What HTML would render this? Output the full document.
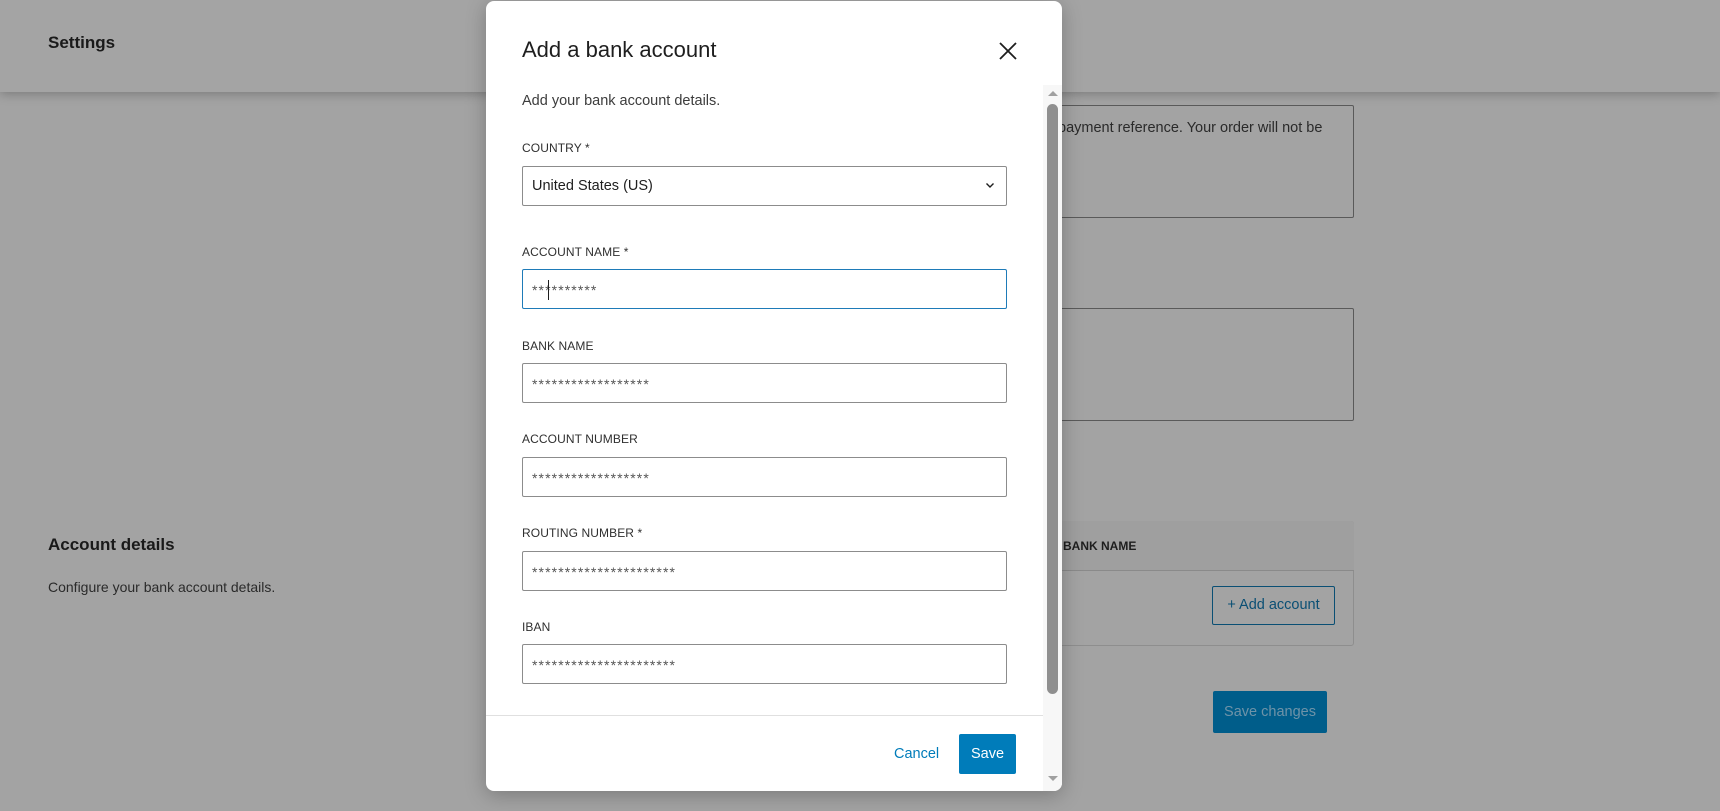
<!DOCTYPE html>
<html><head><meta charset="utf-8">
<style>
*{box-sizing:border-box;margin:0;padding:0}
body{width:1720px;height:811px;overflow:hidden;background:#a3a3a3;font-family:"Liberation Sans",sans-serif;position:relative;color:#1e1e1e}
.a{position:absolute}
.hdr{left:0;top:0;width:1720px;height:92px;background:#a4a4a4;box-shadow:0 2px 10px rgba(0,0,0,.25)}
.ta{border:1px solid #5a5a5a;border-radius:2px;background:#a3a3a3}
.modal{left:486px;top:1px;width:576px;height:790px;background:#fff;border-radius:8px;box-shadow:0 4px 20px rgba(0,0,0,.25);overflow:hidden}
.lbl{font-size:12px;color:#2f2f2f;left:36px;letter-spacing:.1px}
.inp{left:36px;width:485px;height:40px;border:1px solid #8c8c8c;border-radius:2px;font-size:14px;color:#555;padding:12px 0 0 9px;letter-spacing:1.1px}
</style></head><body>
<div class="a hdr"></div>
<div class="a" style="left:48px;top:33px;font-size:17px;font-weight:bold;color:#1a1a1a">Settings</div>

<div class="a ta" style="left:1000px;top:105px;width:354px;height:113px"></div>
<div class="a" style="left:1058px;top:120px;font-size:14.5px;color:#2a2a2a">payment reference. Your order will not be</div>
<div class="a ta" style="left:1000px;top:308px;width:354px;height:113px"></div>

<div class="a" style="left:48px;top:535px;font-size:17px;font-weight:bold;color:#1a1a1a">Account details</div>
<div class="a" style="left:48px;top:579px;font-size:14px;color:#2a2a2a">Configure your bank account details.</div>

<div class="a" style="left:1000px;top:521px;width:354px;height:125px;border:1px solid #8e8e8e;border-radius:3px"></div>
<div class="a" style="left:1000px;top:521px;width:354px;height:50px;background:#9f9f9f;border-bottom:1px solid #8a8a8a;border-radius:3px 3px 0 0"></div>
<div class="a" style="left:1063px;top:539px;font-size:12px;font-weight:bold;color:#1e1e1e">BANK NAME</div>
<div class="a" style="left:1212px;top:586px;width:123px;height:39px;border:1px solid #0a4f74;border-radius:2px;font-size:14.5px;color:#0a4f74;text-align:center;line-height:37px">+ Add account</div>
<div class="a" style="left:1213px;top:691px;width:114px;height:42px;background:#005d8a;border-radius:2px;font-size:14.5px;color:#6e93a8;text-align:center;line-height:42px">Save changes</div>

<div class="a modal">
  <div class="a" style="left:36px;top:36px;font-size:22px;color:#1e1e1e">Add a bank account</div>
  <svg class="a" style="left:512px;top:40px" width="20" height="20" viewBox="0 0 20 20"><path d="M2 2L18 18M18 2L2 18" stroke="#1e1e1e" stroke-width="1.8"/></svg>
  <div class="a" style="left:36px;top:92px;font-size:14.5px;color:#3c3c3c">Add your bank account details.</div>
  <div class="a lbl" style="top:140px">COUNTRY *</div>
  <div class="a inp" style="top:165px;font-size:14.5px;color:#1e1e1e;padding-top:11px;letter-spacing:0">United States (US)</div>
  <svg class="a" style="left:499px;top:180px" width="10" height="8" viewBox="0 0 10 8"><path d="M1.5 2.5L5 6 8.5 2.5" stroke="#1e1e1e" stroke-width="1.4" fill="none"/></svg>
  <div class="a lbl" style="top:244px">ACCOUNT NAME *</div>
  <div class="a inp" style="top:268px;border:1.5px solid #1e7bb8">**********</div>
  <div class="a" style="left:62px;top:279px;width:1px;height:20px;background:#1e1e1e"></div>
  <div class="a lbl" style="top:338px">BANK NAME</div>
  <div class="a inp" style="top:362px">******************</div>
  <div class="a lbl" style="top:431px">ACCOUNT NUMBER</div>
  <div class="a inp" style="top:456px">******************</div>
  <div class="a lbl" style="top:525px">ROUTING NUMBER *</div>
  <div class="a inp" style="top:550px">**********************</div>
  <div class="a lbl" style="top:619px">IBAN</div>
  <div class="a inp" style="top:643px">**********************</div>
  <div class="a" style="left:0;top:714px;width:557px;height:1px;background:#e0e0e0"></div>
  <div class="a" style="left:408px;top:745px;font-size:14.5px;color:#007cba">Cancel</div>
  <div class="a" style="left:473px;top:733px;width:57px;height:40px;background:#007cba;border-radius:2px;color:#fff;font-size:14.5px;text-align:center;line-height:40px">Save</div>
  <div class="a" style="left:557px;top:84px;width:19px;height:706px;background:#f7f7f7"></div>
  <svg class="a" style="left:561px;top:88px" width="12" height="8"><path d="M1 7L6 2 11 7Z" fill="#a0a0a0"/></svg>
  <div class="a" style="left:561px;top:103px;width:11px;height:590px;background:#8f8f8f;border-radius:6px"></div>
  <svg class="a" style="left:561px;top:774px" width="12" height="8"><path d="M1 1L6 6 11 1Z" fill="#a0a0a0"/></svg>
</div>
</body></html>
